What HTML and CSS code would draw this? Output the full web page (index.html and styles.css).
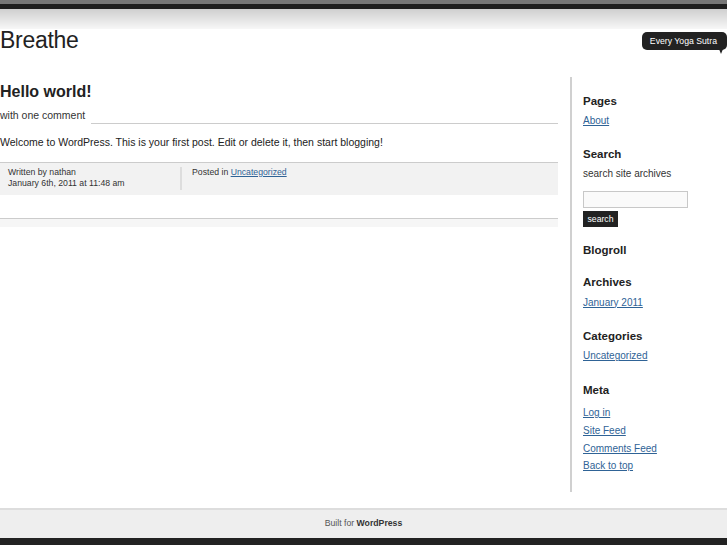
FILE: index.html
```html
<!DOCTYPE html>
<html lang="en">
<head>
<meta charset="utf-8">
<title>Breathe</title>
<link rel="stylesheet" href="styles.css">
</head>
<body>
<div class="topbar"></div>
<div class="header-fade"></div>
<header class="site-header">
  <h1 class="site-title">Breathe</h1>
  <div class="tagline">Every Yoga Sutra</div>
</header>
<div class="wrap">
  <main class="main">
    <article class="post">
      <h2 class="post-title">Hello world!</h2>
      <div class="byline"><span>with one comment</span><span class="byline-rule"></span></div>
      <p class="post-body">Welcome to WordPress. This is your first post. Edit or delete it, then start blogging!</p>
      <div class="post-meta">
        <div class="meta-left">Written by nathan<br>January 6th, 2011 at 11:48 am</div>
        <div class="meta-right">Posted in <a href="#">Uncategorized</a></div>
      </div>
    </article>
    <div class="post-end"></div>
  </main>
  <aside class="sidebar">
    <section class="widget">
      <h3>Pages</h3>
      <ul><li><a href="#">About</a></li></ul>
    </section>
    <section class="widget widget-search">
      <h3>Search</h3>
      <p class="search-note">search site archives</p>
      <form class="search-form">
        <input class="search-input" type="text">
        <button class="search-btn" type="button">search</button>
      </form>
    </section>
    <section class="widget">
      <h3>Blogroll</h3>
    </section>
    <section class="widget">
      <h3>Archives</h3>
      <ul><li><a href="#">January 2011</a></li></ul>
    </section>
    <section class="widget">
      <h3>Categories</h3>
      <ul><li><a href="#">Uncategorized</a></li></ul>
    </section>
    <section class="widget widget-meta">
      <h3>Meta</h3>
      <ul>
        <li><a href="#">Log in</a></li>
        <li><a href="#">Site Feed</a></li>
        <li><a href="#">Comments Feed</a></li>
        <li><a href="#">Back to top</a></li>
      </ul>
    </section>
  </aside>
</div>
<footer class="site-footer">Built for <strong>WordPress</strong></footer>
<div class="bottombar"></div>
</body>
</html>
```
FILE: styles.css
```css
html, body {
  margin: 0;
  padding: 0;
  background: #fff;
}
body {
  font-family: "Liberation Sans", Arial, sans-serif;
  color: #222;
}
.topbar {
  height: 4px;
  background: #777;
  border-bottom: 5px solid #1f1f1f;
}
.header-fade {
  height: 20px;
  background: linear-gradient(#cfcfcf, #f7f7f7);
}
.site-header {
  display: flex;
  justify-content: space-between;
  align-items: flex-start;
  height: 22px;
}
.site-title {
  margin: 0;
  font-size: 23px;
  line-height: 22px;
  font-weight: normal;
  color: #222;
  letter-spacing: -0.3px;
}
.tagline {
  position: relative;
  margin-top: 3px;
  background: #222;
  color: #fff;
  font-size: 8.7px;
  line-height: 18px;
  height: 18px;
  padding: 0 10px 0 8px;
  border-radius: 5px;
}
.tagline::after {
  content: "";
  position: absolute;
  right: 4px;
  bottom: -4px;
  width: 0;
  height: 0;
  border-top: 5px solid #222;
  border-right: 2px solid transparent;
  border-left: 2px solid transparent;
}
.wrap {
  display: flex;
  align-items: flex-start;
  margin-top: 26px;
}
.main {
  width: 558px;
  padding-top: 5px;
}
.post-title {
  margin: 0;
  font-size: 16px;
  line-height: 19px;
  font-weight: bold;
}
.byline {
  display: flex;
  align-items: flex-end;
  margin-top: 7px;
  font-size: 10.5px;
  line-height: 14px;
  color: #333;
}
.byline-rule {
  flex: 1;
  margin-left: 6px;
  margin-bottom: -2px;
  border-bottom: 1px solid #ccc;
}
.post-body {
  margin: 13px 0 0;
  font-size: 10.5px;
  line-height: 14px;
  color: #222;
}
.post-meta {
  display: flex;
  margin-top: 13px;
  border-top: 1px solid #ccc;
  background: #f2f2f2;
  padding: 4px 0 5px 8px;
  font-size: 8.7px;
  line-height: 11.3px;
  color: #333;
}
.meta-left {
  width: 172px;
}
.meta-right {
  border-left: 2px solid #ddd;
  padding-left: 10px;
}
a {
  color: #2f6396;
}
.post-end {
  margin-top: 23px;
  border-top: 1px solid #ccc;
  height: 8px;
  background: #f6f6f6;
}
.sidebar {
  margin-left: 12px;
  border-left: 2px solid #d0d0d0;
  padding: 14.5px 0 15.5px 11px;
  width: 140px;
}
.widget {
  margin-bottom: 14px;
}
.widget:last-child {
  margin-bottom: 0;
}
.widget h3 {
  margin: 0;
  font-size: 11.5px;
  line-height: 18px;
  font-weight: bold;
  color: #222;
}
.widget ul {
  list-style: none;
  margin: 2.5px 0 0;
  padding: 0 0 1.5px;
  font-size: 10px;
  line-height: 17.7px;
}
.widget-meta ul {
  margin-top: 5.5px;
}
.search-note {
  margin: 2px 0 0;
  font-size: 10px;
  line-height: 17.5px;
  color: #333;
}
.search-form {
  margin-top: 8.5px;
  display: flex;
  flex-direction: column;
  align-items: flex-start;
  gap: 3px;
}
.search-input {
  box-sizing: border-box;
  width: 105px;
  height: 17px;
  margin: 0;
  padding: 0 2px;
  border: 1px solid #c8c8c8;
  background: #fafafa;
}
.search-btn {
  box-sizing: border-box;
  width: 35px;
  height: 16px;
  margin: 0;
  padding: 0;
  border: none;
  background: #222;
  color: #fff;
  font-family: "Liberation Sans", Arial, sans-serif;
  font-size: 8.7px;
  line-height: 16px;
}
.site-footer {
  margin-top: 16px;
  border-top: 2px solid #ddd;
  background: #eee;
  padding: 7px 0 9px;
  text-align: center;
  font-size: 8.7px;
  line-height: 12px;
  color: #555;
}
.site-footer strong {
  color: #333;
}
.bottombar {
  height: 20px;
  background: #222;
}
```
